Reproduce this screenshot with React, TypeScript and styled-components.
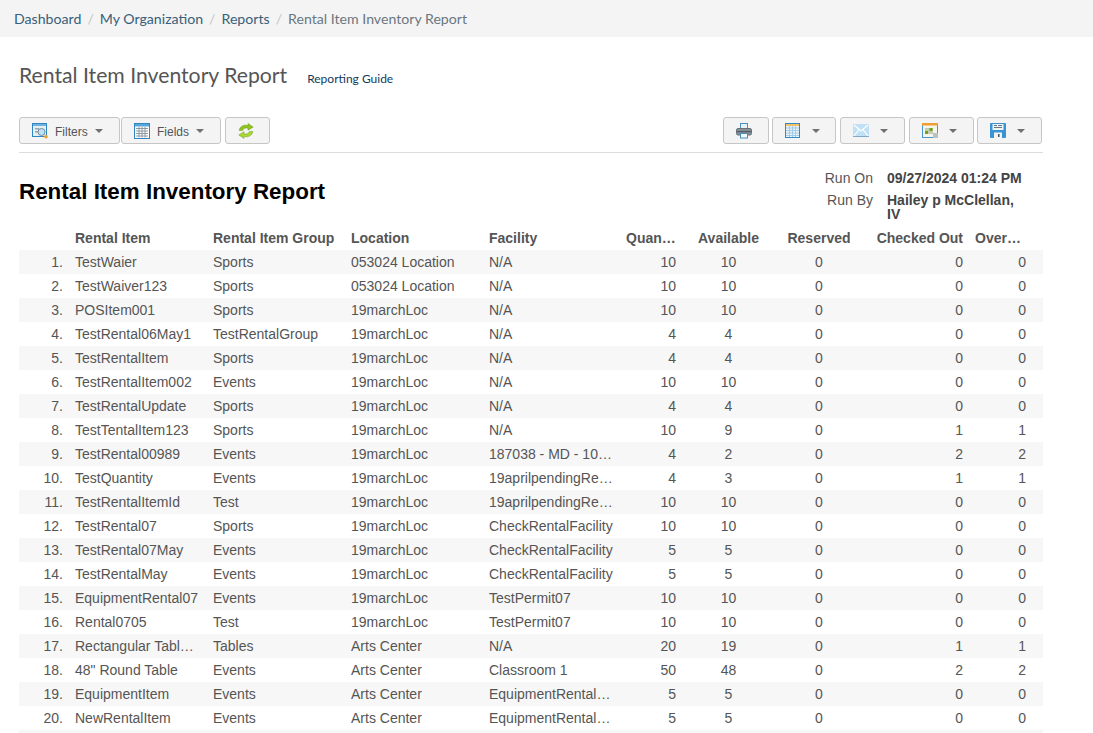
import React from "react";
import styled, { createGlobalStyle } from "styled-components";

const GlobalStyle = createGlobalStyle`
  html, body {
    margin: 0;
    padding: 0;
    height: 100%;
    overflow: hidden;
    background: #fff;
    font-family: "Liberation Sans", Arial, sans-serif;
  }
`;

const Breadcrumbs = styled.nav`
  display: flex;
  align-items: center;
  height: 37px;
  padding-left: 14px;
  background: #f4f4f4;
  font-family: Lato, sans-serif;
  font-size: 14.15px;
`;

const Crumb = styled.a`
  color: #38607a;
  text-decoration: none;
`;

const CurrentCrumb = styled.span`
  color: #6b7780;
`;

const CrumbSep = styled.span`
  color: #c4c4c4;
  padding: 0 6px;
`;

const Main = styled.main`
  padding: 0 50px 0 19px;
`;

const PageHeader = styled.div`
  display: flex;
  align-items: baseline;
  gap: 20px;
  padding-top: 25px;
  height: 55px;
`;

const PageTitle = styled.h1`
  margin: 0;
  font-family: Lato, sans-serif;
  font-size: 21.2px;
  font-weight: 400;
  line-height: 26px;
  color: #555;
`;

const GuideLink = styled.a`
  font-family: Lato, sans-serif;
  font-size: 12px;
  color: #123a5c;
`;

const Toolbar = styled.div`
  display: flex;
  justify-content: space-between;
  height: 35px;
  padding-right: 1px;
  border-bottom: 1px solid #dcdcdc;
`;

const ButtonGroup = styled.div`
  display: flex;
`;

const ToolButton = styled.button<{ $width: number; $gap?: number; $iconGap?: number }>`
  display: flex;
  align-items: center;
  gap: ${(p) => p.$iconGap ?? 7}px;
  box-sizing: border-box;
  width: ${(p) => p.$width}px;
  height: 27px;
  margin-left: ${(p) => p.$gap ?? 0}px;
  padding: 0 0 0 12px;
  background: #f4f4f4;
  border: 1px solid #c6c6c6;
  border-radius: 3px;
  font-family: "Liberation Sans", Arial, sans-serif;
  font-size: 12px;
  color: #555;
`;

const ButtonLabel = styled.span`
  margin-top: 2px;
`;

const Caret = styled.span`
  width: 0;
  height: 0;
  border-left: 4px solid transparent;
  border-right: 4px solid transparent;
  border-top: 4px solid #707070;
`;

const ReportHead = styled.div`
  display: flex;
  justify-content: space-between;
  height: 73px;
`;

const ReportTitle = styled.h2`
  margin: 0;
  padding-top: 26px;
  font-size: 22.4px;
  font-weight: 700;
  line-height: 26px;
  color: #000;
`;

const RunInfo = styled.dl`
  display: grid;
  grid-template-columns: 60px 136px;
  column-gap: 14px;
  align-content: start;
  margin: 18px 20px 0 0;
  font-size: 14px;
  line-height: 14px;
  color: #555;
`;

const RunLabel = styled.dt`
  text-align: right;
  margin-bottom: 8px;
`;

const RunValue = styled.dd`
  margin: 0 0 8px;
  font-weight: 700;
  color: #444;
`;

const Table = styled.table`
  table-layout: fixed;
  width: 1024px;
  border-collapse: collapse;
  font-size: 14px;
  color: #555;
`;

const HeadCell = styled.th<{ $align?: string }>`
  height: 24px;
  padding: 0 6px;
  font-weight: 700;
  text-align: ${(p) => p.$align ?? "left"};
  white-space: nowrap;
  overflow: hidden;
  text-overflow: ellipsis;
  color: #555;
`;

const Row = styled.tr`
  height: 24px;

  &:nth-child(odd) {
    background: #f7f7f7;
  }
`;

const Cell = styled.td<{ $align?: string }>`
  padding: 0 6px;
  text-align: ${(p) => p.$align ?? "left"};
  white-space: nowrap;
  overflow: hidden;
  text-overflow: ellipsis;
`;

const FiltersIcon = () => (
  <svg width="16" height="16" viewBox="0 0 16 16">
    <rect x="0.5" y="0.5" width="14" height="13" fill="#e6eef4" stroke="#2f86c0" />
    <rect x="1" y="1" width="13" height="2" fill="#6fb2de" />
    <rect x="3" y="5" width="4" height="1.5" fill="#9aa5ac" />
    <rect x="3" y="8" width="3" height="1.5" fill="#9aa5ac" />
    <circle cx="9.5" cy="9" r="3.5" fill="#bfe0f5" stroke="#6d8ea5" />
    <circle cx="14" cy="13.8" r="1.8" fill="#f0a030" />
  </svg>
);

const FieldsIcon = () => (
  <svg width="16" height="16" viewBox="0 0 16 16">
    <rect x="0.5" y="0.5" width="15" height="15" fill="#fff" stroke="#2f86c0" />
    <rect x="1" y="1" width="14" height="2.5" fill="#5aa6d8" />
    <path d="M2 5.5h12M2 8h12M2 10.5h12M2 13h12M5 4v10.5M8 4v10.5M11 4v10.5" stroke="#8c98a0" strokeWidth="1" fill="none" />
  </svg>
);

const arrowPath = "M1.2 7.4C1.8 3.4 5.8 1.4 10 2.5V0.6L15.2 4.1 10 7.2V5.2C7.6 4.5 5.4 5.1 4.6 7.4Z";

const RefreshIcon = () => (
  <svg width="16" height="16" viewBox="0 0 16 16">
    <path d={arrowPath} fill="#8fc31f" stroke="#6a9a18" strokeWidth="0.5" />
    <path d={arrowPath} fill="#a8d834" stroke="#6a9a18" strokeWidth="0.5" transform="rotate(180 8 8)" />
  </svg>
);

const PrintIcon = () => (
  <svg width="16" height="16" viewBox="0 0 16 16">
    <rect x="4.5" y="0.5" width="7" height="5" fill="#e9f2f8" stroke="#4a8fc0" />
    <rect x="0.5" y="5.5" width="15" height="6.5" rx="1.5" fill="#858f96" stroke="#6a7379" />
    <rect x="1" y="8" width="14" height="1.2" fill="#525a60" />
    <rect x="4.5" y="10.5" width="7" height="4.5" fill="#f4f8fb" stroke="#4a8fc0" />
  </svg>
);

const GridIcon = () => (
  <svg width="16" height="15" viewBox="0 0 16 15">
    <rect x="0.5" y="0.5" width="14" height="14" fill="#eaf4fb" stroke="#2f8ac6" />
    <path d="M1 5h13M1 7.5h13M1 10h13M1 12.5h13M4.5 3v11M7.5 3v11M10.5 3v11" stroke="#a3cbe6" strokeWidth="1" fill="none" />
    <rect x="1" y="1" width="13" height="2" fill="#f3c26a" />
  </svg>
);

const MailIcon = () => (
  <svg width="16" height="13" viewBox="0 0 16 13">
    <rect x="0" y="0" width="16" height="13" fill="#bfe0f5" />
    <rect x="0" y="12" width="16" height="1" fill="#7fa9c4" />
    <path d="M1 1l7 6 7-6M1 12l5-6.5M15 12l-5-6.5" stroke="#fff" strokeWidth="1.2" fill="none" />
  </svg>
);

const ScheduleIcon = () => (
  <svg width="16" height="15" viewBox="0 0 16 15">
    <rect x="0.5" y="0.5" width="15" height="14" fill="#f5f5ea" stroke="#4a97cc" />
    <rect x="0" y="0" width="16" height="2.5" fill="#f0a030" />
    <rect x="3" y="5" width="8" height="6" fill="#c6ccb4" />
    <rect x="3" y="8" width="3" height="3" fill="#6aa51c" />
    <rect x="7.5" y="5" width="3" height="3" fill="#6aa51c" />
    <rect x="11" y="10" width="5" height="5" fill="#b9c1c6" />
  </svg>
);

const SaveIcon = () => (
  <svg width="16" height="15" viewBox="0 0 16 15">
    <rect x="0" y="0" width="16" height="15" rx="1" fill="#3a94d2" />
    <rect x="2.5" y="1" width="11" height="6" fill="#eef3f7" />
    <path d="M4 2.5h3M8 2.5h4M4 4.5h8" stroke="#6b7780" strokeWidth="1" />
    <rect x="4" y="9.5" width="8" height="5.5" fill="#f0f4f7" />
    <rect x="8" y="11" width="1.5" height="3" fill="#44505a" />
  </svg>
);

type Item = [string, string, string, string, number, number, number, number, number];

const items: Item[] = [
  ["TestWaier", "Sports", "053024 Location", "N/A", 10, 10, 0, 0, 0],
  ["TestWaiver123", "Sports", "053024 Location", "N/A", 10, 10, 0, 0, 0],
  ["POSItem001", "Sports", "19marchLoc", "N/A", 10, 10, 0, 0, 0],
  ["TestRental06May1", "TestRentalGroup", "19marchLoc", "N/A", 4, 4, 0, 0, 0],
  ["TestRentalItem", "Sports", "19marchLoc", "N/A", 4, 4, 0, 0, 0],
  ["TestRentalItem002", "Events", "19marchLoc", "N/A", 10, 10, 0, 0, 0],
  ["TestRentalUpdate", "Sports", "19marchLoc", "N/A", 4, 4, 0, 0, 0],
  ["TestTentalItem123", "Sports", "19marchLoc", "N/A", 10, 9, 0, 1, 1],
  ["TestRental00989", "Events", "19marchLoc", "187038 - MD - 10x10 Tent", 4, 2, 0, 2, 2],
  ["TestQuantity", "Events", "19marchLoc", "19aprilpendingRental", 4, 3, 0, 1, 1],
  ["TestRentalItemId", "Test", "19marchLoc", "19aprilpendingRental", 10, 10, 0, 0, 0],
  ["TestRental07", "Sports", "19marchLoc", "CheckRentalFacility", 10, 10, 0, 0, 0],
  ["TestRental07May", "Events", "19marchLoc", "CheckRentalFacility", 5, 5, 0, 0, 0],
  ["TestRentalMay", "Events", "19marchLoc", "CheckRentalFacility", 5, 5, 0, 0, 0],
  ["EquipmentRental07", "Events", "19marchLoc", "TestPermit07", 10, 10, 0, 0, 0],
  ["Rental0705", "Test", "19marchLoc", "TestPermit07", 10, 10, 0, 0, 0],
  ["Rectangular Table 6ft", "Tables", "Arts Center", "N/A", 20, 19, 0, 1, 1],
  ['48" Round Table', "Events", "Arts Center", "Classroom 1", 50, 48, 0, 2, 2],
  ["EquipmentItem", "Events", "Arts Center", "EquipmentRentalFacility", 5, 5, 0, 0, 0],
  ["NewRentalItem", "Events", "Arts Center", "EquipmentRentalFacility", 5, 5, 0, 0, 0],
];

const widths = [50, 138, 138, 138, 137, 62, 93, 88, 106, 63, 11];

export default function App() {
  return (
    <>
      <GlobalStyle />
      <Breadcrumbs>
        <Crumb href="#">Dashboard</Crumb>
        <CrumbSep>/</CrumbSep>
        <Crumb href="#">My Organization</Crumb>
        <CrumbSep>/</CrumbSep>
        <Crumb href="#">Reports</Crumb>
        <CrumbSep>/</CrumbSep>
        <CurrentCrumb>Rental Item Inventory Report</CurrentCrumb>
      </Breadcrumbs>
      <Main>
        <PageHeader>
          <PageTitle>Rental Item Inventory Report</PageTitle>
          <GuideLink>Reporting Guide</GuideLink>
        </PageHeader>
        <Toolbar>
          <ButtonGroup>
            <ToolButton $width={101}>
              <FiltersIcon />
              <ButtonLabel>Filters</ButtonLabel>
              <Caret />
            </ToolButton>
            <ToolButton $width={100} $gap={1}>
              <FieldsIcon />
              <ButtonLabel>Fields</ButtonLabel>
              <Caret />
            </ToolButton>
            <ToolButton $width={45} $gap={4}>
              <RefreshIcon />
            </ToolButton>
          </ButtonGroup>
          <ButtonGroup>
            <ToolButton $width={46}>
              <PrintIcon />
            </ToolButton>
            <ToolButton $width={64} $gap={3} $iconGap={11}>
              <GridIcon />
              <Caret />
            </ToolButton>
            <ToolButton $width={65} $gap={4} $iconGap={11}>
              <MailIcon />
              <Caret />
            </ToolButton>
            <ToolButton $width={65} $gap={4} $iconGap={11}>
              <ScheduleIcon />
              <Caret />
            </ToolButton>
            <ToolButton $width={65} $gap={3} $iconGap={11}>
              <SaveIcon />
              <Caret />
            </ToolButton>
          </ButtonGroup>
        </Toolbar>
        <ReportHead>
          <ReportTitle>Rental Item Inventory Report</ReportTitle>
          <RunInfo>
            <RunLabel>Run On</RunLabel>
            <RunValue>09/27/2024 01:24 PM</RunValue>
            <RunLabel>Run By</RunLabel>
            <RunValue>Hailey p McClellan, IV</RunValue>
          </RunInfo>
        </ReportHead>
        <Table>
          <colgroup>
            {widths.map((w, i) => (
              <col key={i} width={w} />
            ))}
          </colgroup>
          <thead>
            <tr>
              <HeadCell />
              <HeadCell>Rental Item</HeadCell>
              <HeadCell>Rental Item Group</HeadCell>
              <HeadCell>Location</HeadCell>
              <HeadCell>Facility</HeadCell>
              <HeadCell $align="right">Quantity</HeadCell>
              <HeadCell $align="center">Available</HeadCell>
              <HeadCell $align="center">Reserved</HeadCell>
              <HeadCell $align="right">Checked Out</HeadCell>
              <HeadCell $align="right">Overdue</HeadCell>
              <HeadCell />
            </tr>
          </thead>
          <tbody>
            {items.map((it, i) => (
              <Row key={i}>
                <Cell $align="right">{i + 1}.</Cell>
                <Cell>{it[0]}</Cell>
                <Cell>{it[1]}</Cell>
                <Cell>{it[2]}</Cell>
                <Cell>{it[3]}</Cell>
                <Cell $align="right">{it[4]}</Cell>
                <Cell $align="center">{it[5]}</Cell>
                <Cell $align="center">{it[6]}</Cell>
                <Cell $align="right">{it[7]}</Cell>
                <Cell $align="right">{it[8]}</Cell>
                <Cell />
              </Row>
            ))}
            <Row>
              <Cell colSpan={11} />
            </Row>
          </tbody>
        </Table>
      </Main>
    </>
  );
}
